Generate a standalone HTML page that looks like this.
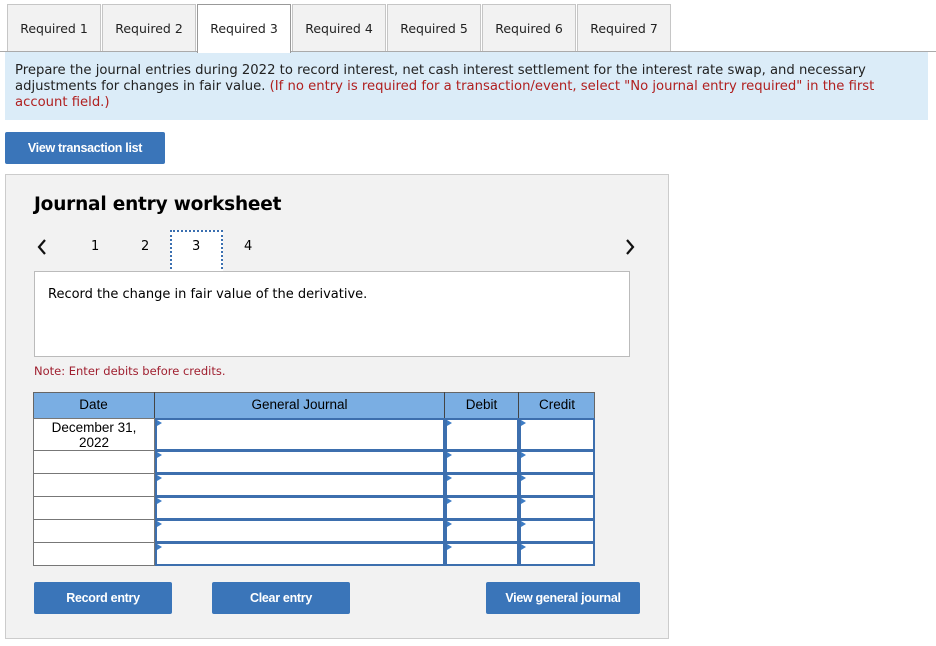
<!DOCTYPE html>
<html><head><style>
*{box-sizing:border-box;margin:0;padding:0}
body{width:936px;height:646px;background:#fff;position:relative;font-family:"DejaVu Sans","Liberation Sans",sans-serif;font-size:13px;color:#000;overflow:hidden}
.a{position:absolute}
.tab{position:absolute;top:4px;height:48px;width:94px;background:#f2f2f2;border:1px solid #c6c6c6;border-bottom:none;font-size:12.5px;text-align:center;line-height:48px;color:#222}
.tab.on{background:#fff;border:1px solid #999;border-bottom:none;height:49px;z-index:2}
.btn{position:absolute;background:#3a75b9;color:#fff;font-family:"Liberation Sans",sans-serif;font-weight:bold;font-size:12.5px;text-align:center;border-radius:2px;letter-spacing:-0.3px}
.c{position:absolute;background:#fff;border:2px solid #3d6fae}
.c:before{content:"";position:absolute;left:0;top:0;border-left:5px solid #3d7cc4;border-top:3.5px solid transparent;border-bottom:3.5px solid transparent}
.d{position:absolute;left:33px;width:122px;background:#fff;border:1px solid #777}
</style></head><body>
<div class="tab" style="left:7px">Required 1</div>
<div class="tab" style="left:102px">Required 2</div>
<div class="tab on" style="left:197px">Required 3</div>
<div class="tab" style="left:292px">Required 4</div>
<div class="tab" style="left:387px">Required 5</div>
<div class="tab" style="left:482px">Required 6</div>
<div class="tab" style="left:577px">Required 7</div>
<div class="a" style="left:0;top:51px;width:936px;height:1px;background:#aaa"></div>
<div class="a" style="left:5px;top:52px;width:923px;height:68px;background:#dbecf8;padding:11px 45px 11px 10px;line-height:16px;font-size:13.2px;color:#222">Prepare the journal entries during 2022 to record interest, net cash interest settlement for the interest rate swap, and necessary adjustments for changes in fair value. <span style="color:#b02020">(If no entry is required for a transaction/event, select "No journal entry required" in the first account field.)</span></div>
<div class="btn" style="left:5px;top:132px;width:160px;height:32px;line-height:32px">View transaction list</div>
<div class="a" style="left:5px;top:174px;width:664px;height:465px;background:#f2f2f2;border:1px solid #ccc"></div>
<div class="a" style="left:34px;top:194px;font-size:18.5px;font-weight:bold;letter-spacing:-0.2px">Journal entry worksheet</div>
<svg class="a" style="left:36px;top:238px" width="12" height="18"><path d="M9 2 L3 9 L9 16" fill="none" stroke="#111" stroke-width="2.2"/></svg>
<svg class="a" style="left:624px;top:238px" width="12" height="18"><path d="M3 2 L9 9 L3 16" fill="none" stroke="#111" stroke-width="2.2"/></svg>
<div class="a" style="left:91px;top:239px">1</div>
<div class="a" style="left:141px;top:239px">2</div>
<div class="a" style="left:170px;top:230px;width:53px;height:43px;background:#fff;border:2px dotted #3a6fb0"></div>
<div class="a" style="left:192px;top:239px">3</div>
<div class="a" style="left:244px;top:239px">4</div>
<div class="a" style="left:34px;top:271px;width:596px;height:86px;background:#fff;border:1px solid #bbb;padding:15px 13px">Record the change in fair value of the derivative.</div>
<div class="a" style="left:34px;top:364px;font-size:11.5px;color:#a02030">Note: Enter debits before credits.</div>
<div class="a" style="left:33px;top:392px;width:562px;height:27px;background:#7aaee3;border:1px solid #666"></div>
<div class="a" style="left:33px;top:392px;width:122px;height:27px;line-height:26px;text-align:center;font-family:'Liberation Sans';font-size:13.5px;border-right:1px solid #444">Date</div>
<div class="a" style="left:155px;top:392px;width:290px;height:27px;line-height:26px;text-align:center;font-family:'Liberation Sans';font-size:13.5px;border-right:1px solid #444">General Journal</div>
<div class="a" style="left:445px;top:392px;width:74px;height:27px;line-height:26px;text-align:center;font-family:'Liberation Sans';font-size:13.5px;border-right:1px solid #444">Debit</div>
<div class="a" style="left:519px;top:392px;width:76px;height:27px;line-height:26px;text-align:center;font-family:'Liberation Sans';font-size:13.5px">Credit</div>
<div class="a" style="left:33px;top:418px;width:562px;height:1px;background:#222"></div>
<div class="d" style="top:418px;height:33px;text-align:center;font-family:'Liberation Sans';font-size:13.5px;line-height:15px;padding-top:1px">December 31,<br>2022</div>
<div class="d" style="top:450px;height:24px"></div>
<div class="d" style="top:473px;height:24px"></div>
<div class="d" style="top:496px;height:24px"></div>
<div class="d" style="top:519px;height:24px"></div>
<div class="d" style="top:542px;height:24px"></div>
<div class="c" style="left:155px;top:418px;width:290px;height:33px"></div><div class="c" style="left:445px;top:418px;width:74px;height:33px"></div><div class="c" style="left:519px;top:418px;width:76px;height:33px"></div>
<div class="c" style="left:155px;top:450px;width:290px;height:24px"></div><div class="c" style="left:445px;top:450px;width:74px;height:24px"></div><div class="c" style="left:519px;top:450px;width:76px;height:24px"></div>
<div class="c" style="left:155px;top:473px;width:290px;height:24px"></div><div class="c" style="left:445px;top:473px;width:74px;height:24px"></div><div class="c" style="left:519px;top:473px;width:76px;height:24px"></div>
<div class="c" style="left:155px;top:496px;width:290px;height:24px"></div><div class="c" style="left:445px;top:496px;width:74px;height:24px"></div><div class="c" style="left:519px;top:496px;width:76px;height:24px"></div>
<div class="c" style="left:155px;top:519px;width:290px;height:24px"></div><div class="c" style="left:445px;top:519px;width:74px;height:24px"></div><div class="c" style="left:519px;top:519px;width:76px;height:24px"></div>
<div class="c" style="left:155px;top:542px;width:290px;height:24px"></div><div class="c" style="left:445px;top:542px;width:74px;height:24px"></div><div class="c" style="left:519px;top:542px;width:76px;height:24px"></div>
<div class="btn" style="left:34px;top:582px;width:138px;height:32px;line-height:32px">Record entry</div>
<div class="btn" style="left:212px;top:582px;width:138px;height:32px;line-height:32px">Clear entry</div>
<div class="btn" style="left:486px;top:582px;width:154px;height:32px;line-height:32px">View general journal</div>
</body></html>
